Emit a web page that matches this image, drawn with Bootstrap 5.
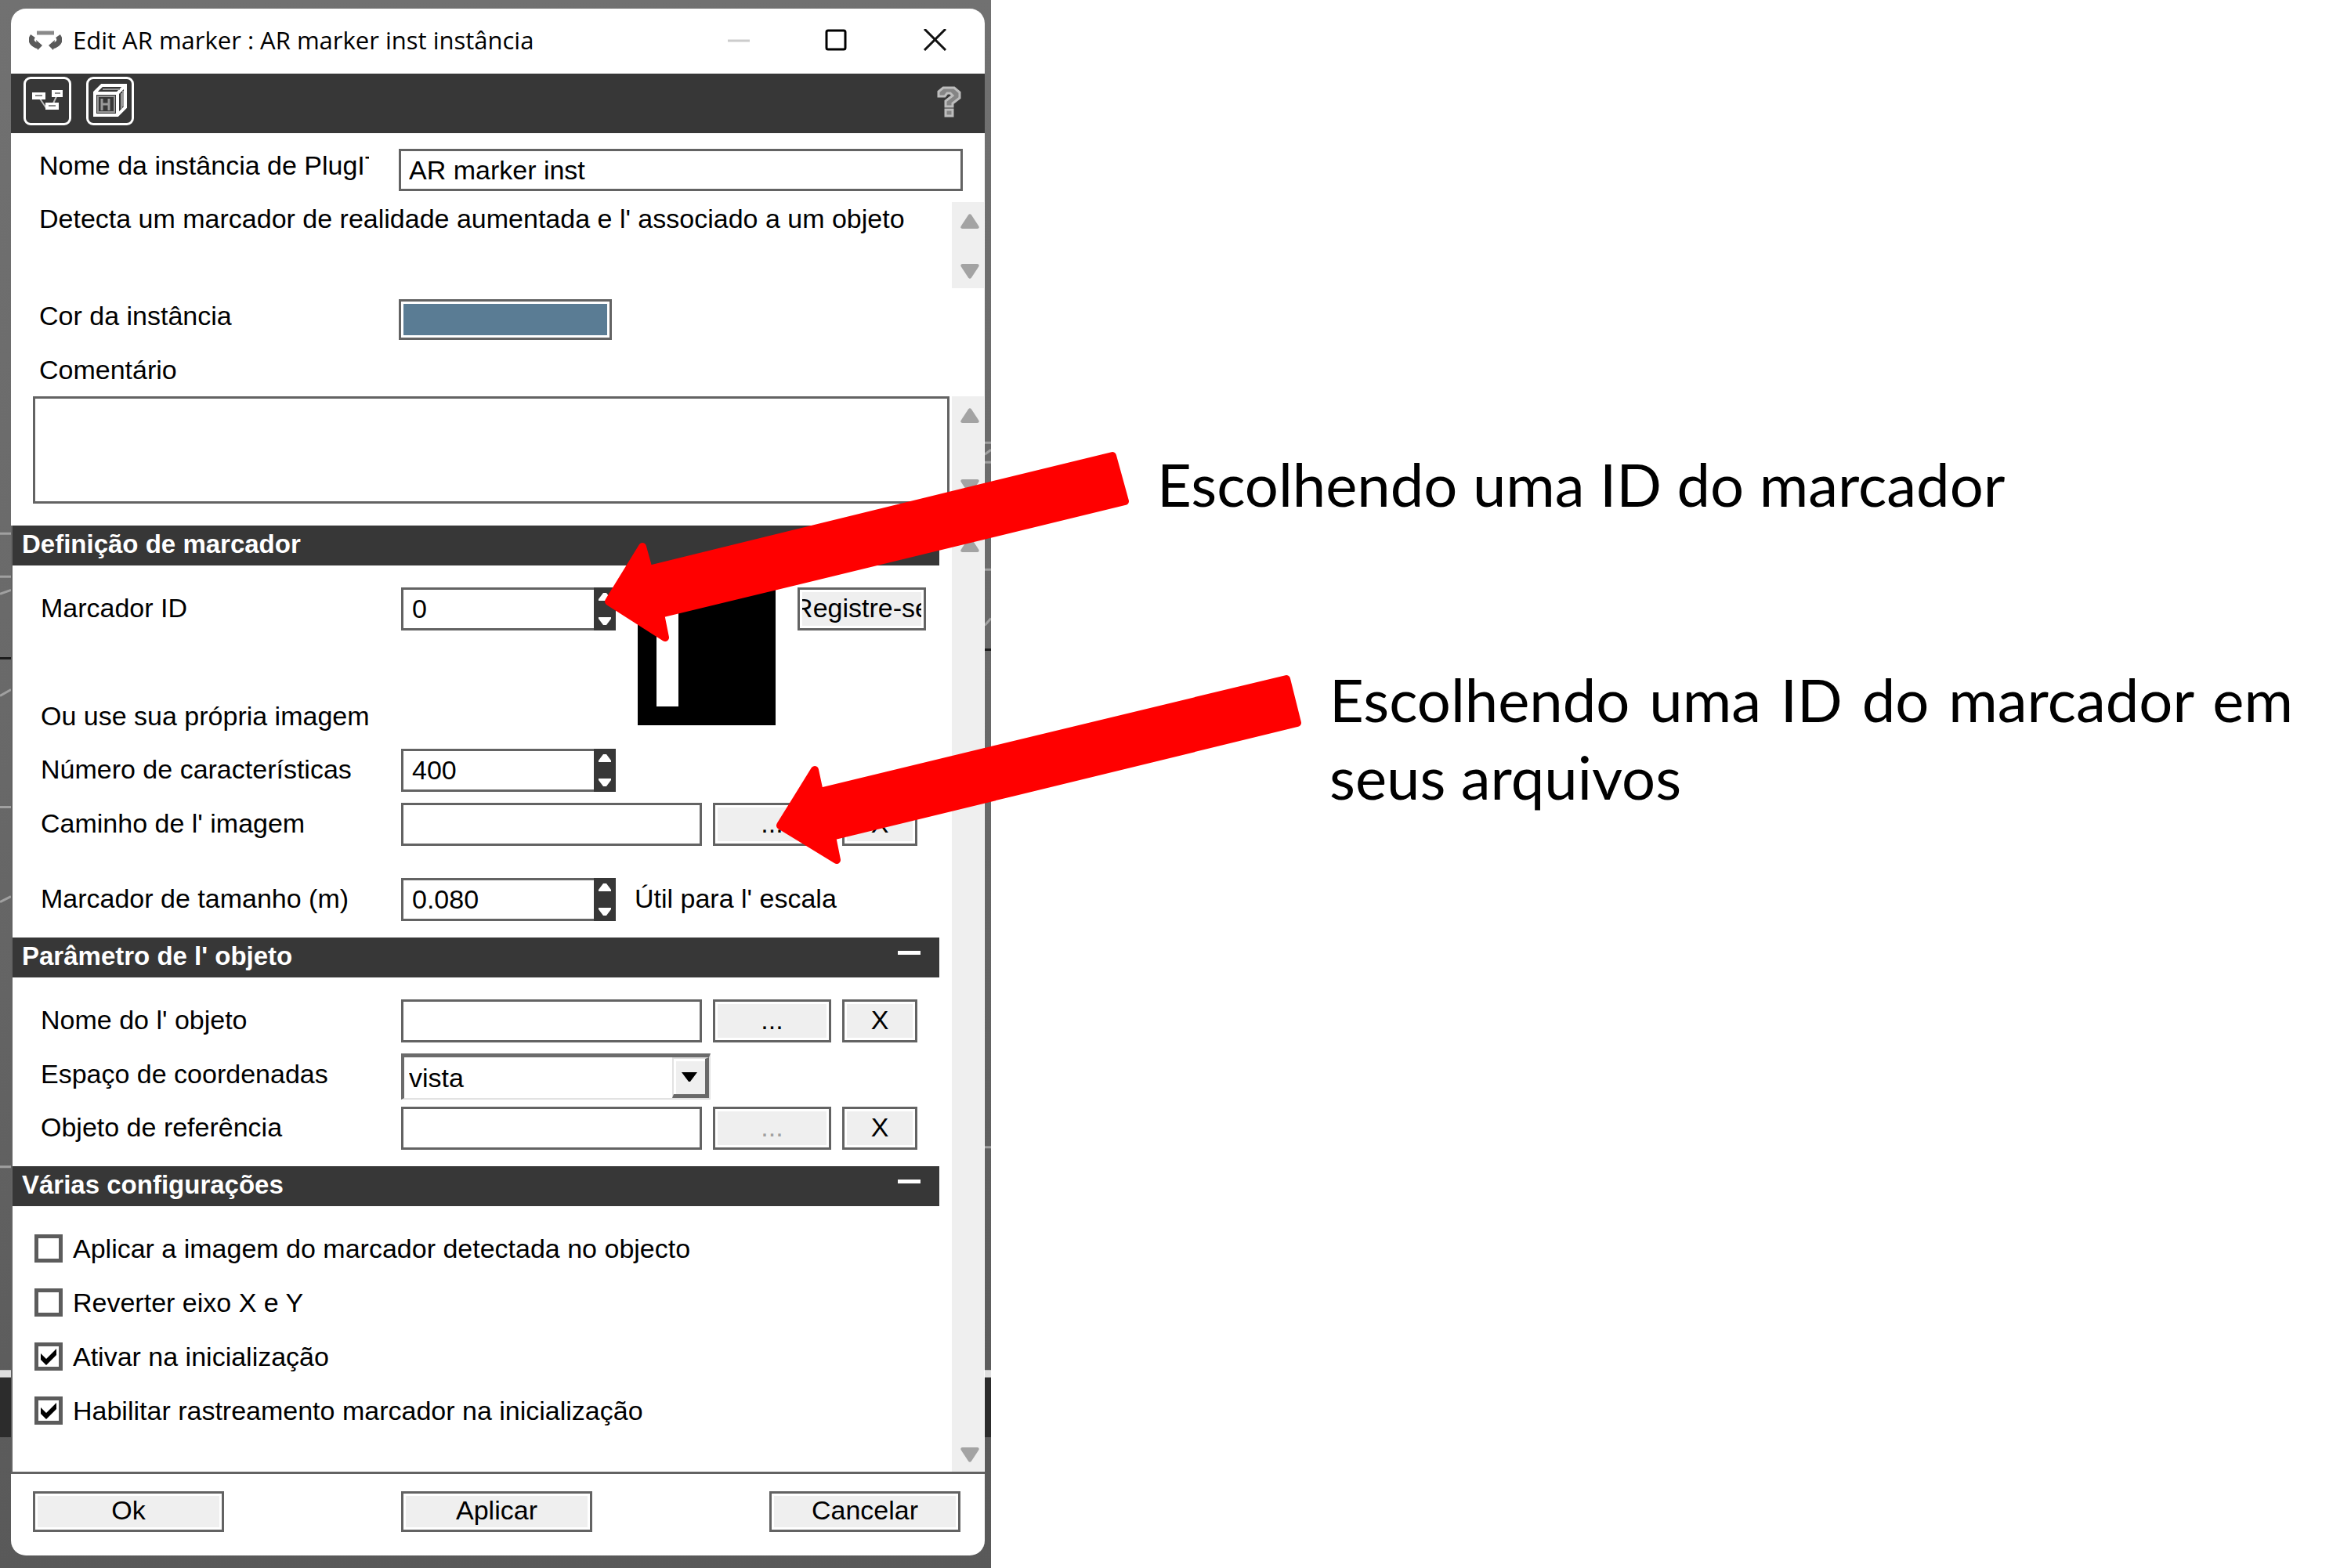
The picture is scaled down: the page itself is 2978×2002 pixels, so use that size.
<!DOCTYPE html>
<html lang="pt">
<head>
<meta charset="utf-8">
<meta name="viewport" content="width=device-width, initial-scale=1">
<title>Edit AR marker</title>
<link href="https://cdn.jsdelivr.net/npm/bootstrap@5.3.0/dist/css/bootstrap.min.css" rel="stylesheet">
<script src="https://cdn.jsdelivr.net/npm/bootstrap@5.3.0/dist/js/bootstrap.bundle.min.js"></script>
<style>
  :root { --line: #636363; --dark: #373737; --face: #efefef; --tri: #a3a3a3; }
  body { font-family: "Liberation Sans", Arial, sans-serif; font-size: 34px; line-height: 40px; color: #000; background: #fff; }
  .slide { display: grid; grid-template-columns: 1265fr 1713fr; min-height: 100vh; }
  .desk { background: linear-gradient(#717171, #686868 50%, #595959); padding: 11px 8px 17px 14px; }
  .desk-lines { inset: 0; width: 100%; height: 100%; }
  .dialog { background: #fff; border-radius: 19px; }
  .titlebar { height: 83px; padding: 0 48px 4px 23px; font-family: "Open Sans", "Noto Sans", sans-serif; }
  .titlebar h1 { font-size: 31px; line-height: 40px; font-weight: 400; padding-left: 14px; }
  .bare { background: none; border: 0; padding: 0; display: flex; }
  .toolbar { height: 76px; background: var(--dark); padding: 4px 29px 12px 16px; gap: 19px; }
  .tool { width: 61px; height: 62px; border: 3px solid #fff; border-radius: 9px; }
  .line-row { display: flex; align-items: flex-start; }
  .cap { flex: 0 0 460px; padding-top: 6px; }
  .field { height: 55px; border: 3px solid var(--line); border-radius: 0; background: #fff; padding: 0 11px; color: #000; min-width: 0; }
  .field-path { width: 384px; }
  .field-num { width: 246px; border-right: 0; }
  .general { padding: 20px 1px 28px 28px; }
  .general .cap { flex-basis: 467px; padding: 1px 0 0 8px; }
  .general .clip { overflow: hidden; white-space: nowrap; display: block; width: 421px; }
  .general .field { height: 54px; padding: 0 10px; margin-right: 27px; }
  .about { padding: 1px 0 0 8px; margin-top: 14px; }
  .about-scroll { height: 110px; margin-top: 14px; }
  .color-row { margin-top: 14px; }
  .general .note-cap { padding-top: 18px; }
  .note-row { margin-top: 14px; gap: 3px; }
  .swatch { width: 272px; height: 52px; border: 3px solid var(--line); background: #5a7c94; box-shadow: inset 0 0 0 3px #fff; padding: 0; border-radius: 0; }
  .note { height: 137px; border: 3px solid var(--line); resize: none; border-radius: 0; min-width: 0; }
  .scroller { flex: 0 0 41px; background: var(--face); display: flex; flex-direction: column; justify-content: space-between; align-items: center; padding: 15px 0 12px 4px; }
  .scroller svg { width: 24px; height: 19px; fill: var(--tri); display: block; }
  .sections { gap: 16px; padding-right: 1px; }
  .panes { border-left: 2px solid var(--line); }
  .bar { height: 51px; background: var(--dark); color: #fff; padding: 0 24px 4px 12px; }
  .bar h2 { font-size: 33px; line-height: 40px; font-weight: 700; }
  .minus { width: 29px; height: 5px; background: #fff; margin-bottom: 9px; }
  .pane { padding: 28px 0 21px 36px; }
  .id-row { height: 184px; }
  .feat-row { margin-top: 22px; }
  .path-row { margin-top: 14px; }
  .size-row { margin-top: 41px; }
  .hint { padding: 6px 0 0 24px; }
  .combo-row { margin: 14px 0 9px; }
  .push { height: 55px; border: 3px solid var(--line); background: var(--face); box-shadow: inset 0 0 0 3px #fff; border-radius: 0; padding: 0 3px 3px; color: #000; display: flex; align-items: center; justify-content: center; overflow: hidden; }
  .push:disabled { color: #a0a0a0; }
  .push span { flex: 1; min-width: 0; overflow: hidden; display: flex; justify-content: center; white-space: nowrap; }
  .browse { width: 151px; margin: 0 14px; }
  .wipe { width: 96px; }
  .spin { width: 28px; height: 55px; background: var(--dark); display: flex; flex-direction: column; justify-content: space-between; align-items: center; padding: 7px 0; }
  .spin svg { width: 16px; height: 10px; fill: #fff; display: block; }
  .marker { width: 176px; height: 176px; margin-left: 28px; background: #000; padding: 24px; }
  .marker i { display: block; width: 28px; height: 128px; background: #fff; }
  .enroll { width: 164px; margin-left: 28px; }
  .combo { width: 395px; height: 59px; }
  .combo select { width: 100%; height: 100%; appearance: none; border: solid; border-width: 5px 2px 2px 4px; border-color: #6b6b6b #e2e2e2 #e2e2e2 #6b6b6b; background: #fff; padding: 0 6px; color: #000; }
  .combo-btn { right: 2px; top: 5px; bottom: 2px; width: 47px; background: var(--face); border: solid; border-width: 2px 5px 5px 2px; border-color: #e2e2e2 #696969 #696969 #e2e2e2; box-shadow: inset 3px 3px 0 #fff; pointer-events: none; display: flex; align-items: center; justify-content: center; }
  .checks { padding: 36px 0 60px 28px; gap: 33px; }
  .tick { appearance: none; width: 36px; height: 36px; border: 5px solid #5c5c5c; background: #fff; margin: 0; }
  .tick:checked { background: #fff url("data:image/svg+xml,%3Csvg xmlns='http://www.w3.org/2000/svg' viewBox='0 0 26 26'%3E%3Cpath d='M3 9l7 7L23 3v8L10 24 3 17z'/%3E%3C/svg%3E") center / 26px 26px no-repeat; }
  .checks label { padding-left: 13px; line-height: 36px; }
  .foot { border-top: 3px solid var(--line); padding: 22px 31px 30px 28px; }
  .foot .push { width: 244px; height: 52px; padding-bottom: 5px; }
  .notes { font-family: Lato, "Open Sans", sans-serif; font-size: 76px; line-height: 99px; padding: 568px 51px 0 0; }
  .notes p { margin: 0; }
  .first { padding-left: 212px; }
  .notes .second { padding-left: 432px; margin-top: 176px; text-align: justify; }
  .arrows { left: 0; top: 0; width: 100vw; pointer-events: none; fill: red; stroke: red; stroke-width: 10px; stroke-linejoin: round; }
</style>
</head>
<body>
<svg class="d-none">
  <symbol id="up" viewBox="0 0 24 19"><path d="M10 1.500q2-2.500 4 0L23.500 16q.8 3-2 3h-19q-2.800 0-2-3z"/></symbol>
  <symbol id="down" viewBox="0 0 24 19"><path d="M10 17.500q2 2.500 4 0L23.500 3q.8-3-2-3h-19q-2.800 0-2 3z"/></symbol>
  <symbol id="sup" viewBox="0 0 16 10"><path d="M6 0h4l6 8v2H0V8z"/></symbol>
  <symbol id="sdown" viewBox="0 0 16 10"><path d="M6 10h4l6-8V0H0v2z"/></symbol>
</svg>
<main class="slide position-relative">
  <div class="desk position-relative">
    <svg class="desk-lines position-absolute" viewBox="0 0 1265 2002" preserveAspectRatio="none" fill="none" stroke="#a0a0a0" stroke-width="3" aria-hidden="true">
      <path d="M0 681h14M0 736h14M0 758l14-5M0 888l14-8M0 1030h14M0 1151l14-7M0 1489h14"/>
      <path d="M1257 565h8M1257 580l8-6M1257 590h8M1257 727h8M1257 798l8-9M1257 1464h8"/>
      <path stroke="#1c1c1c" d="M0 840h14M1257 829h8"/>
      <path stroke="#2c2c2c" stroke-width="76" d="M0 1796h1265"/>
      <path stroke="#dedede" stroke-width="9" d="M0 1753h1265"/>
    </svg>
    <div class="dialog position-relative overflow-hidden">
      <header class="titlebar d-flex align-items-center">
        <svg width="42" height="28" viewBox="0 0 42 28" fill="none" stroke="#5a5a5a" aria-hidden="true">
          <path stroke="#8a8a8a" stroke-width="5" d="M10 5h22"/>
          <path stroke-width="7" d="M5 9c-5 7 1 11 7 13M37 9c5 7-1 11-7 13"/>
          <path fill="#5a5a5a" stroke="none" d="M9 14l8 7-6 6zM33 14l-8 7 6 6z"/>
        </svg>
        <h1 class="m-0 me-auto">Edit AR marker : AR marker inst instância</h1>
        <button class="bare" aria-label="Minimizar"><svg width="28" height="28"><path d="M0 15h28" stroke="#ccc" stroke-width="3"/></svg></button>
        <button class="bare ms-5" aria-label="Maximizar"><svg class="ms-5" width="28" height="28"><rect x="2" y="2" width="24" height="24" rx="2" fill="none" stroke="#000" stroke-width="3"/></svg></button>
        <button class="bare ms-5" aria-label="Fechar"><svg class="ms-5" width="32" height="28"><path d="M3 0l27 27M30 0L3 27" stroke="#111" stroke-width="3"/></svg></button>
      </header>
      <div class="toolbar d-flex align-items-start">
        <button class="bare tool" aria-label="Vínculos"><svg width="55" height="56" viewBox="0 0 55 56">
          <path d="M16 22l10 15M41 18l-7 15" stroke="#bbb" stroke-width="2"/>
          <path fill="#fff" d="M8 17h17v9H8zM33 14h14v9H33zM25 30h17v9H25z"/><path d="M12 21h9M37 18h7M29 34h9" stroke="#888" stroke-width="2"/></svg></button>
        <button class="bare tool" aria-label="Objeto 3D"><svg width="55" height="56" viewBox="0 0 55 56" fill="none" stroke="#fff" stroke-width="4">
          <path d="M8 17L17 8h30v28l-10 10H8zM8 18h29v27M37 18l10-10"/><path stroke="#999" stroke-width="2" d="M12 22h21v20H12zM42 18v20M44 15v20M18 13h22"/><path stroke="#999" stroke-width="3" d="M17 25v15M26 25v15M17 32h9"/></svg></button>
        <button class="bare ms-auto mt-2" aria-label="Ajuda"><svg class="mt-1" width="32" height="40" viewBox="0 0 32 40" fill="#858585" stroke="#bdbdbd" stroke-width="3">
          <path d="M2 13V7l6-5h14l7 6v7l-9 7v4h-9v-7l9-7-3-3h-4l-3 4zM11 30h9v8h-9z"/></svg></button>
      </div>
      <div class="general">
        <div class="line-row">
          <label class="cap" for="nm"><span class="clip">Nome da instância de PlugIT</span></label>
          <input class="field flex-fill" id="nm" value="AR marker inst">
        </div>
        <div class="d-flex justify-content-between">
          <div class="about">Detecta um marcador de realidade aumentada e l' associado a um objeto</div>
          <div class="scroller about-scroll"><svg><use href="#up"/></svg><svg><use href="#down"/></svg></div>
        </div>
        <div class="line-row color-row">
          <label class="cap" for="cor">Cor da instância</label>
          <button class="swatch" id="cor" aria-label="Cor da instância"></button>
        </div>
        <label class="cap note-cap d-block" for="cm">Comentário</label>
        <div class="d-flex note-row">
          <textarea class="note flex-fill" id="cm"></textarea>
          <div class="scroller"><svg><use href="#up"/></svg><svg><use href="#down"/></svg></div>
        </div>
      </div>
      <div class="sections d-flex">
        <div class="panes flex-fill">
          <div class="bar d-flex align-items-center justify-content-between"><h2 class="m-0">Definição de marcador</h2><span class="minus"></span></div>
          <div class="pane">
            <div class="line-row id-row">
              <div class="d-flex flex-column justify-content-between align-self-stretch">
                <div class="line-row">
                  <label class="cap" for="mid">Marcador ID</label>
                  <input class="field field-num" id="mid" value="0">
                  <div class="spin"><svg><use href="#sup"/></svg><svg><use href="#sdown"/></svg></div>
                </div>
                <div>Ou use sua própria imagem</div>
              </div>
              <div class="marker"><i></i></div>
              <button class="push enroll"><span>Registre-se</span></button>
            </div>
            <div class="line-row feat-row">
              <label class="cap" for="nc">Número de características</label>
              <input class="field field-num" id="nc" value="400">
              <div class="spin"><svg><use href="#sup"/></svg><svg><use href="#sdown"/></svg></div>
            </div>
            <div class="line-row path-row">
              <label class="cap" for="ci">Caminho de l' imagem</label>
              <input class="field field-path" id="ci">
              <button class="push browse">...</button><button class="push wipe">X</button>
            </div>
            <div class="line-row size-row">
              <label class="cap" for="mt">Marcador de tamanho (m)</label>
              <input class="field field-num" id="mt" value="0.080">
              <div class="spin"><svg><use href="#sup"/></svg><svg><use href="#sdown"/></svg></div>
              <div class="hint">Útil para l' escala</div>
            </div>
          </div>
          <div class="bar d-flex align-items-center justify-content-between"><h2 class="m-0">Parâmetro de l' objeto</h2><span class="minus"></span></div>
          <div class="pane">
            <div class="line-row">
              <label class="cap" for="no">Nome do l' objeto</label>
              <input class="field field-path" id="no">
              <button class="push browse">...</button><button class="push wipe">X</button>
            </div>
            <div class="line-row combo-row">
              <label class="cap" for="ec">Espaço de coordenadas</label>
              <div class="combo position-relative">
                <select id="ec"><option>vista</option></select>
                <span class="combo-btn position-absolute"><svg width="20" height="12"><path d="M0 0h20L11 12H9z"/></svg></span>
              </div>
            </div>
            <div class="line-row">
              <label class="cap" for="or">Objeto de referência</label>
              <input class="field field-path" id="or">
              <button class="push browse" disabled>...</button><button class="push wipe">X</button>
            </div>
          </div>
          <div class="bar d-flex align-items-center justify-content-between"><h2 class="m-0">Várias configurações</h2><span class="minus"></span></div>
          <div class="checks d-flex flex-column">
            <div class="d-flex"><input class="tick" type="checkbox" id="k1"><label for="k1">Aplicar a imagem do marcador detectada no objecto</label></div>
            <div class="d-flex"><input class="tick" type="checkbox" id="k2"><label for="k2">Reverter eixo X e Y</label></div>
            <div class="d-flex"><input class="tick" type="checkbox" id="k3" checked><label for="k3">Ativar na inicialização</label></div>
            <div class="d-flex"><input class="tick" type="checkbox" id="k4" checked><label for="k4">Habilitar rastreamento marcador na inicialização</label></div>
          </div>
        </div>
        <div class="scroller"><svg><use href="#up"/></svg><svg><use href="#down"/></svg></div>
      </div>
      <footer class="foot d-flex justify-content-between">
        <button class="push">Ok</button><button class="push">Aplicar</button><button class="push">Cancelar</button>
      </footer>
    </div>
  </div>
  <section class="notes">
    <p class="first">Escolhendo uma ID do marcador</p>
    <p class="second">Escolhendo uma ID do marcador em seus arquivos</p>
  </section>
  <svg class="arrows position-absolute" viewBox="0 0 2978 2002" aria-hidden="true">
    <path d="M777 768L820 698 828 727 1420 582 1436 640 843 784 849 814z"/>
    <path d="M996 1054L1040 983 1046 1011 1642 867 1656 923 1062 1068 1068 1098z"/>
  </svg>
</main>
</body>
</html>
